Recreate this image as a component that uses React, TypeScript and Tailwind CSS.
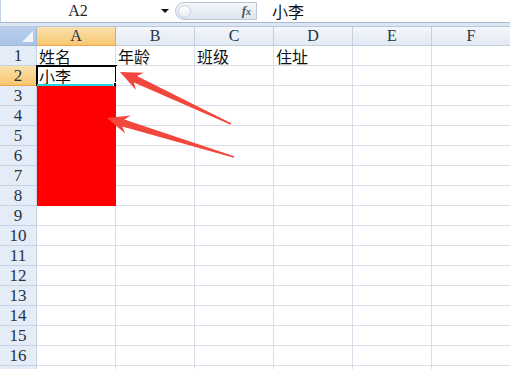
import React from "react";

const COLS = ["A", "B", "C", "D", "E", "F"];
const ROWS = Array.from({ length: 17 }, (_, i) => i + 1);

const data: Record<string, string> = {
  A1: "姓名",
  B1: "年龄",
  C1: "班级",
  D1: "住址",
  A2: "小李",
};

const cjk = "font-['Noto_Sans_CJK_SC','Noto_Sans',sans-serif]";
const head = "font-['Liberation_Serif','DejaVu_Serif',serif]";

// tapered arrow with notched head, tail -> tip
function arrowPoints(tx: number, ty: number, hx: number, hy: number) {
  const dx = hx - tx;
  const dy = hy - ty;
  const len = Math.hypot(dx, dy);
  const ux = dx / len;
  const uy = dy / len;
  const nx = -uy;
  const ny = ux;
  const p = (x: number, y: number) => `${x.toFixed(1)},${y.toFixed(1)}`;
  const bx = hx - ux * 22;
  const by = hy - uy * 22;
  const sx = hx - ux * 17;
  const sy = hy - uy * 17;
  return [
    p(hx, hy),
    p(bx + nx * 9.5, by + ny * 9.5),
    p(sx + nx * 3.6, sy + ny * 3.6),
    p(tx + nx * 0.8, ty + ny * 0.8),
    p(tx - nx * 0.8, ty - ny * 0.8),
    p(sx - nx * 3.6, sy - ny * 3.6),
    p(bx - nx * 9.5, by - ny * 9.5),
  ].join(" ");
}

function FormulaBar() {
  return (
    <div className="flex items-center h-[22px] bg-white border-l border-[#c5d3e6]">
      <div className={`w-[154px] text-center text-[16px] text-[#222] leading-[22px] ${head}`}>A2</div>
      <div className="w-[20px] flex justify-center">
        <div className="w-0 h-0 border-l-[4px] border-r-[4px] border-t-[4px] border-l-transparent border-r-transparent border-t-[#111]" />
      </div>
      <div className="relative w-[82px] h-[18px] rounded-l-full rounded-r-[2px] border border-[#b9c6d8] bg-gradient-to-b from-[#f4f7fb] to-[#dde5ef] flex items-center">
        <div className="ml-[2px] w-[13px] h-[13px] rounded-full border border-[#c6d1df] bg-gradient-to-b from-white to-[#e6ecf3]" />
        <span className="ml-auto mr-[5px] text-[13px] italic font-bold text-[#555] font-['Liberation_Serif',serif]">
          f<span className="text-[10px]">x</span>
        </span>
      </div>
      <div className={`ml-[15px] text-[16px] text-[#111] leading-[22px] ${cjk}`}>小李</div>
    </div>
  );
}

function ColumnHeader({ col }: { col: string }) {
  const active = col === "A";
  return (
    <div
      className={
        active
          ? `h-[19px] flex items-center justify-center border-r border-b border-[#f2a64b] bg-gradient-to-b from-[#fbe1ad] to-[#f6c76e] text-[16px] text-[#243444] ${head}`
          : `h-[19px] flex items-center justify-center border-r border-b border-[#c3cfdf] bg-gradient-to-b from-[#f4f7fb] to-[#e2e9f3] text-[16px] text-[#243444] ${head}`
      }
    >
      {col}
    </div>
  );
}

function RowHeader({ row }: { row: number }) {
  const active = row === 2;
  return (
    <div
      className={
        active
          ? `h-[20px] flex items-center justify-center border-r border-b border-[#f2a64b] bg-gradient-to-b from-[#fbe1ad] to-[#f6c76e] text-[17px] text-[#243444] ${head}`
          : `h-[20px] flex items-center justify-center border-r border-b border-[#c7d3e3] bg-[#e4ecf7] text-[17px] text-[#243444] ${head}`
      }
    >
      {row}
    </div>
  );
}

function Cell({ col, row }: { col: string; row: number }) {
  const key = `${col}${row}`;
  const red = col === "A" && row >= 3 && row <= 8;
  const selected = key === "A2";
  return (
    <div
      className={
        red
          ? "relative h-[20px] bg-[#ff0000] border-r border-b border-[#ff0000]"
          : "relative h-[20px] border-r border-b border-[#d8dee9] bg-white"
      }
    >
      {data[key] && (
        <span className={`absolute left-[2px] bottom-[-1px] text-[16px] leading-[20px] text-[#111] ${cjk}`}>
          {data[key]}
        </span>
      )}
      {selected && (
        <>
          <div className="absolute left-[-1px] top-[-1px] right-[-2px] bottom-[-1px] border-2 border-black" />
          <div className="absolute left-0 right-0 bottom-[-1px] h-[2px] bg-[#21d6e0]" />
          <div className="absolute right-[-4px] bottom-[-3px] w-[6px] h-[6px] bg-black border border-white" />
        </>
      )}
    </div>
  );
}

export default function App() {
  return (
    <div className="relative w-[510px] h-[369px] overflow-hidden bg-white">
      <FormulaBar />
      <div className="h-[1px] bg-[#a9bbd3]" />
      <div className="h-[3px] bg-[#dde7f3]" />
      <div className="h-[1px] bg-[#b8c8dc]" />

      <div className="grid grid-cols-[37px_repeat(6,79px)]">
        <div className="relative h-[19px] border-r border-b border-[#9fb6d3] bg-gradient-to-b from-[#b9cfec] to-[#a9c3e6] flex items-end justify-end p-[3px]">
          <svg width="11" height="11" viewBox="0 0 11 11">
            <polygon points="11,0 11,11 0,11" fill="#f2f6fb" />
          </svg>
        </div>
        {COLS.map((c) => (
          <ColumnHeader key={c} col={c} />
        ))}
        {ROWS.map((r) => (
          <React.Fragment key={r}>
            <RowHeader row={r} />
            {COLS.map((c) => (
              <Cell key={c} col={c} row={r} />
            ))}
          </React.Fragment>
        ))}
      </div>

      <svg className="absolute left-0 top-0 pointer-events-none" width="510" height="369">
        <polygon points={arrowPoints(231, 124, 120, 72)} fill="#f2473d" />
        <polygon points={arrowPoints(234, 157, 107, 118)} fill="#f2473d" />
      </svg>
    </div>
  );
}
